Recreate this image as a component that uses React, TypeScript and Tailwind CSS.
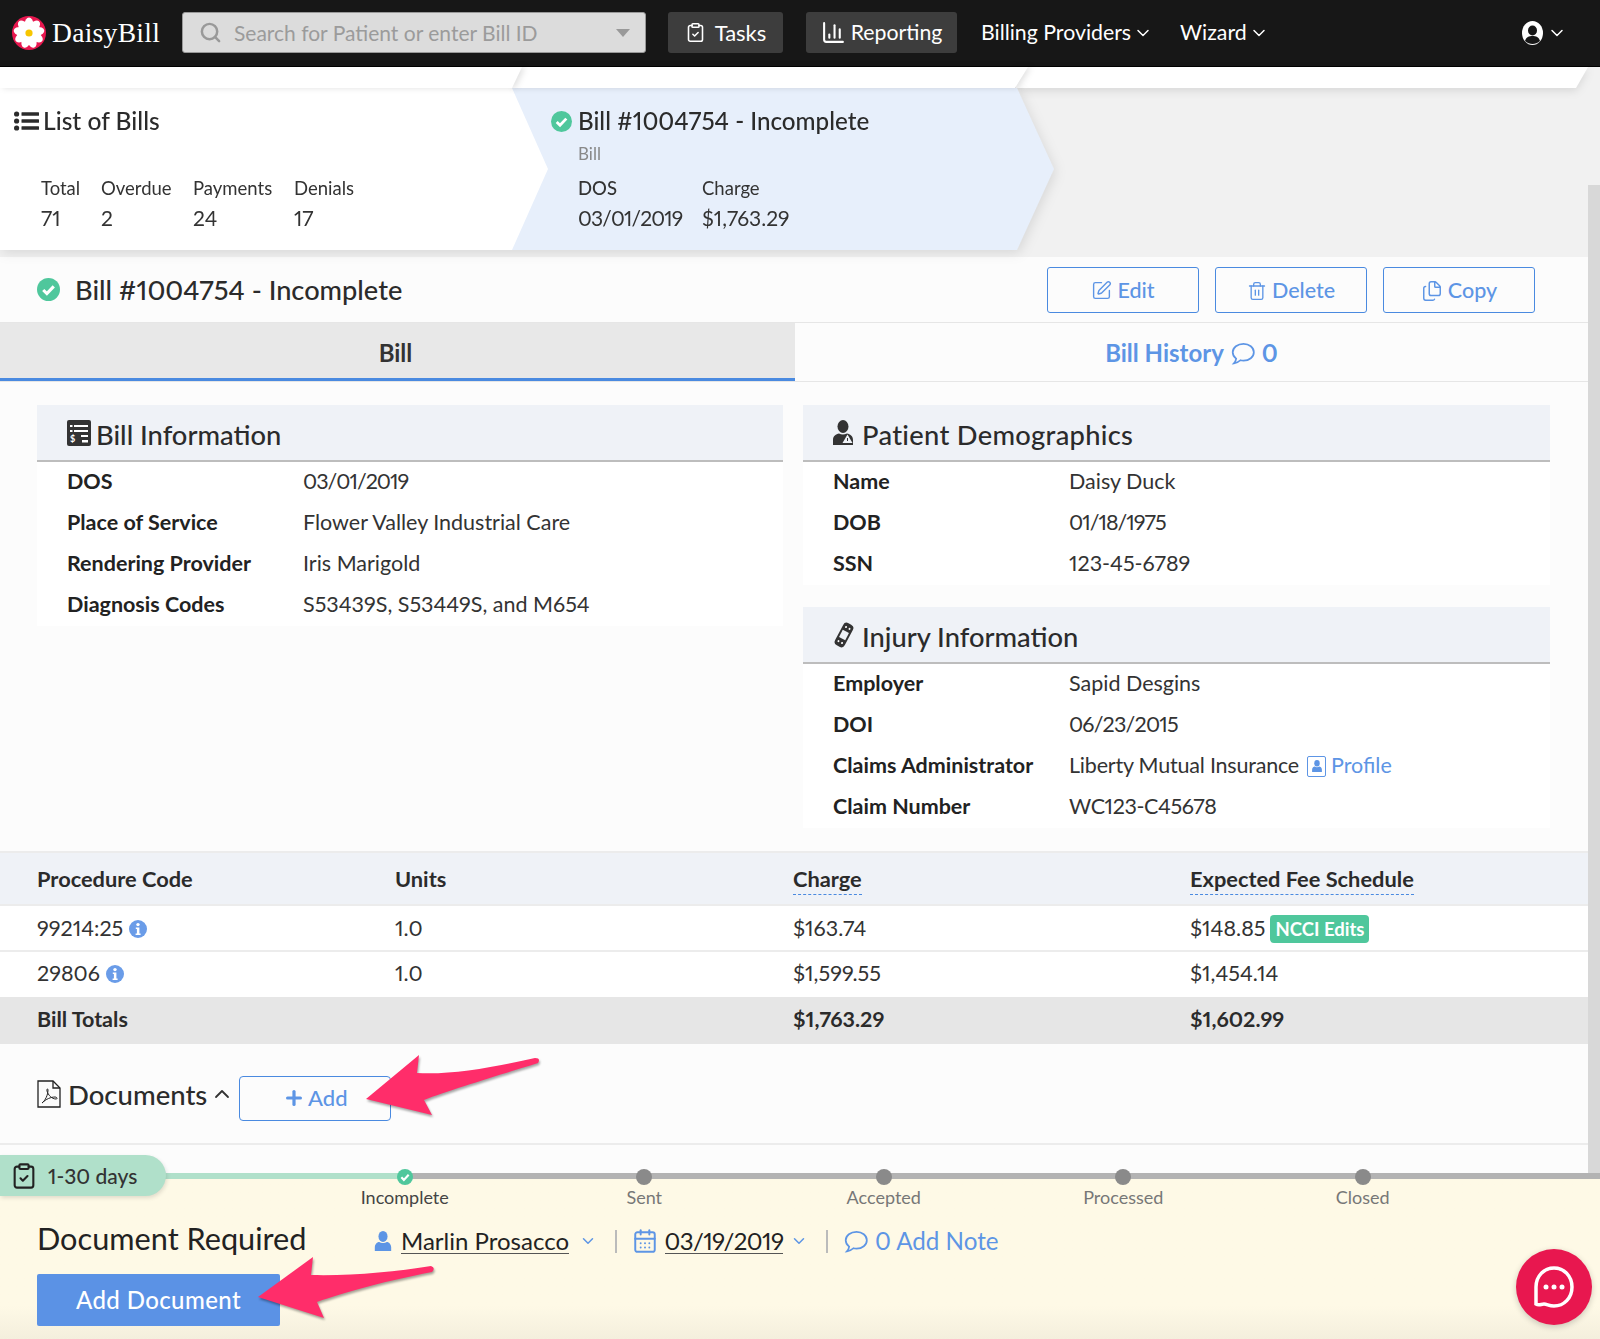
import { ChevronDown, ChevronUp, Files, Plus, Search, SquarePen, Trash2, CalendarDays, ClipboardCheck, ChartColumn } from "lucide-react"

const billInfo: [string, React.ReactNode][] = [
  ["DOS", <Tight key="d">03/01/2019</Tight>],
  ["Place of Service", "Flower Valley Industrial Care"],
  ["Rendering Provider", "Iris Marigold"],
  ["Diagnosis Codes", "S53439S, S53449S, and M654"],
]
const patient: [string, React.ReactNode][] = [
  ["Name", "Daisy Duck"],
  ["DOB", <Tight key="b">01/18/1975</Tight>],
  ["SSN", "123-45-6789"],
]

// Lato's slashes run wider than the reference face
function Tight({ children }: { children: React.ReactNode }) {
  return <span className="tracking-[-1px]">{children}</span>
}

function Flower() {
  const angles = [0, 40, 80, 120, 160, 200, 240, 280, 320]
  return (
    <svg width="34" height="34" viewBox="0 0 34 34" className="shrink-0">
      <circle cx="17" cy="17" r="17" fill="#e8174f" />
      {angles.map((a) => (
        <ellipse key={a} cx="17" cy="8.5" rx="4.4" ry="7" fill="#fff" transform={`rotate(${a} 17 17)`} />
      ))}
      <circle cx="17" cy="17" r="3.6" fill="#f7c600" />
    </svg>
  )
}

function CheckDot({ size }: { size: number }) {
  return (
    <svg width={size} height={size} viewBox="0 0 24 24" className="shrink-0">
      <circle cx="12" cy="12" r="12" fill="#4fc79c" />
      <path d="M6.5 12.5l3.8 3.8 7.2-7.6" fill="none" stroke="#fff" strokeWidth="3.2" />
    </svg>
  )
}

function InfoDot() {
  return (
    <svg width="18" height="18" viewBox="0 0 18 18" className="shrink-0">
      <circle cx="9" cy="9" r="9" fill="#6a9ce8" />
      <circle cx="9" cy="4.6" r="1.7" fill="#fff" />
      <path d="M6.8 7.4h3.6v6h1.2v1.6H6.6v-1.6h1.3V9H6.8z" fill="#fff" />
    </svg>
  )
}

function Person({ color, size }: { color: string; size: number }) {
  return (
    <svg width={size} height={size} viewBox="0 0 20 22" className="shrink-0">
      <ellipse cx="10" cy="6" rx="5" ry="6" fill={color} />
      <path d="M1 22v-4c0-4 3-6 5-6 2 1.600 6 1.600 8 0 2 0 5 2 5 6v4z" fill={color} />
    </svg>
  )
}

function Bubble({ size }: { size: number }) {
  return (
    <svg width={size} height={size} viewBox="0 0 24 24" fill="none" stroke="#5d95e5" strokeWidth="1.6" className="shrink-0">
      <path d="M12.5 3.500c5.200 0 9.500 3.400 9.500 7.800s-4.300 7.800-9.500 7.800c-1 0-2-.1-2.900-.4-1.500 1.500-3.600 2.500-6 2.800 1.200-1.300 1.900-2.700 2.100-4.300C3.700 15.700 2.500 13.600 2.500 11.300c0-4.400 4.500-7.800 10-7.800z" />
    </svg>
  )
}

function ListIcon() {
  return (
    <svg width="25" height="20" viewBox="0 0 25 20" fill="#2b2b2b" className="shrink-0">
      <circle cx="2.600" cy="3" r="2.600" />
      <circle cx="2.600" cy="10" r="2.600" />
      <circle cx="2.600" cy="17" r="2.600" />
      <rect x="7.500" y="1.300" width="17.500" height="3.400" rx="0.500" />
      <rect x="7.500" y="8.300" width="17.500" height="3.400" rx="0.500" />
      <rect x="7.500" y="15.300" width="17.500" height="3.400" rx="0.500" />
    </svg>
  )
}

function BillIcon() {
  return (
    <svg width="24" height="26" viewBox="0 0 24 26" className="shrink-0">
      <rect width="24" height="26" rx="2" fill="#333" />
      <path d="M7 5h14v2H7zM7 10h14v2H7zM14 15h7v2h-7zM15 20h6v2.500h-6z" fill="#fff" />
      <path d="M3 5h2.500v2H3zM3 10h2.500v2H3z" fill="#fff" />
      <text x="3" y="22" fontSize="9" fontWeight="700" fill="#fff" fontFamily="Lato, sans-serif">$</text>
    </svg>
  )
}

function PatientIcon() {
  return (
    <svg width="21" height="25" viewBox="0 0 21 25" className="shrink-0">
      <ellipse cx="10" cy="6.500" rx="5.500" ry="6.500" fill="#333" />
      <path d="M0 25v-5c0-4 3-6 6-6.500 2.500 1.300 5 1.300 8 0 3 .5 6 2.500 6 6.500v5z" fill="#333" />
      <path d="M14.500 14.500l5 8.500h-10z" fill="#eff2f7" />
      <path d="M14 18h1v3h-1z" fill="#333" />
    </svg>
  )
}

function BandageIcon() {
  return (
    <svg width="22" height="26" viewBox="0 0 22 26" className="shrink-0">
      <g transform="rotate(28 11 13)">
        <rect x="5.500" y="0.500" width="11" height="25" rx="4" fill="#333" />
        <rect x="7.500" y="9" width="7" height="8" fill="#eff2f7" />
        <circle cx="9" cy="5" r="1" fill="#fff" />
        <circle cx="13" cy="5" r="1" fill="#fff" />
        <circle cx="9" cy="21" r="1" fill="#fff" />
        <circle cx="13" cy="21" r="1" fill="#fff" />
      </g>
    </svg>
  )
}

function PdfIcon() {
  return (
    <svg width="24" height="28" viewBox="0 0 24 28" fill="none" stroke="#222" strokeWidth="1.300" className="shrink-0">
      <path d="M1 1h15l7 7v19H1z" />
      <path d="M16 1v7h7" />
      <path d="M5 23c3-2 6-8 6-13 0-2-1.500-1-1 1 1 4 5 8 9 8 2 0 1-2-1-2-4 0-9 2-13 6z" strokeWidth="1" />
    </svg>
  )
}

function SectionHead({ icon, title, cls }: { icon: React.ReactNode; title: string; cls: string }) {
  return (
    <div className={`flex h-[57px] items-center ${cls} border-b-2 border-[#bdbdbd] bg-[#eff2f7] pl-[30px] text-[27.300px] font-medium leading-none text-[#2b2b2b]`}>
      {icon}
      <span className="pt-[5px]">{title}</span>
    </div>
  )
}

function InfoRow({ label, children }: { label: string; children: React.ReactNode }) {
  return (
    <div className="grid h-[41px] grid-cols-[236px_1fr] items-center pb-[1px] pl-[30px] text-[21.500px] leading-none">
      <div className="font-bold text-[#222]">{label}</div>
      <div className="flex items-center text-[#333]">{children}</div>
    </div>
  )
}

function OutlineBtn({ icon, label }: { icon: React.ReactNode; label: string }) {
  return (
    <button className="flex h-[46px] w-[152px] items-center justify-center gap-[5px] rounded-[3px] border-[1.5px] border-[#4a8ae0] pt-[2px] text-[21.500px] font-medium text-[#5d95e5]">
      {icon}
      {label}
    </button>
  )
}

function TableRow({ cells, cls }: { cells: React.ReactNode[]; cls: string }) {
  return (
    <div className={`grid grid-cols-[358px_398px_397px_1fr] items-center pl-[37px] leading-none ${cls}`}>
      <div className="flex items-center gap-[6px]">{cells[0]}</div>
      <div>{cells[1]}</div>
      <div>{cells[2]}</div>
      <div className="flex items-center gap-[6px]">{cells[3]}</div>
    </div>
  )
}

function Tip({ children }: { children: React.ReactNode }) {
  return <span className="mt-[5px] inline-block border-b-[1.5px] border-dashed border-[#4a8ae0] pb-[4px]">{children}</span>
}

function Step({ label, active }: { label: string; active?: boolean }) {
  return (
    <div className="flex w-[239.500px] flex-col items-center">
      {active ? <CheckDot size={16} /> : <div className="size-[16px] rounded-full bg-[#8a8a8a]" />}
      <div className={`text-[18px] leading-[24px] ${active ? "text-[#444]" : "text-[#777]"}`}>{label}</div>
    </div>
  )
}

export default function App() {
  return (
    <div className="relative flex h-[1339px] w-[1600px] flex-col overflow-hidden bg-[#fcfcfc] font-['Lato',sans-serif] text-[#333] proportional-nums">
      {/* top bar */}
      <header className="flex h-[67px] shrink-0 items-center border-b border-black bg-[#171717] pb-[1px] pl-[12px] text-white">
        <Flower />
        <div className="ml-[6px] w-[130px] font-['Liberation_Serif',serif] text-[27.500px] leading-none tracking-[0.3px]">DaisyBill</div>
        <div className="flex h-[41px] w-[464px] items-center rounded-[3px] border border-[#999] bg-[#dcdcdc] pl-[16px]">
          <Search size={23} strokeWidth={2.6} className="text-[#999]" />
          <span className="ml-[12px] w-[382px] text-[21px] text-[#9b9b9b]">Search for Patient or enter Bill ID</span>
          <span className="border-x-[7px] border-t-[8px] border-x-transparent border-t-[#999]" />
        </div>
        <div className="ml-[22px] flex h-[41px] w-[115px] items-center justify-center gap-[9px] rounded-[3px] bg-[#3d3d3d] text-[22px]">
          <ClipboardCheck size={21} strokeWidth={1.800} />
          Tasks
        </div>
        <div className="ml-[23px] flex h-[41px] w-[151px] items-center justify-center gap-[5px] rounded-[3px] bg-[#3d3d3d] text-[21.300px]">
          <ChartColumn size={25} strokeWidth={2} />
          Reporting
        </div>
        <div className="ml-[24px] flex items-center gap-[2px] text-[21.300px]">
          Billing Providers <ChevronDown size={20} strokeWidth={1.800} />
        </div>
        <div className="ml-[27px] flex items-center gap-[2px] text-[21.300px]">
          Wizard <ChevronDown size={20} strokeWidth={1.800} />
        </div>
        <div className="ml-auto mr-[33px] flex items-center gap-[4px]">
          <svg width="21" height="24" viewBox="0 0 21 24">
            <ellipse cx="10.500" cy="12" rx="10.500" ry="12" fill="#fff" />
            <ellipse cx="10.500" cy="9.500" rx="4.500" ry="5" fill="#171717" />
            <path d="M3 20c1-4 4-5 7.500-5s6.500 1 7.500 5c-2 2-5 3-7.500 3S5 22 3 20z" fill="#171717" />
          </svg>
          <ChevronDown size={20} strokeWidth={1.800} />
        </div>
      </header>

      {/* page + scrollbar */}
      <div className="flex min-h-0 flex-1">
        <main className="w-[1588px] shrink-0">
          <div className="bg-[#f1f1f1] pb-[7px]">
            {/* tail of the row above */}
            <div className="flex h-[21px]">
              <div className="relative z-20 w-[522px] drop-shadow-[3px_0_3px_rgba(0,0,0,0.12)]">
                <div className="h-full bg-white [clip-path:polygon(0_0,100%_0,512px_100%,0_100%)]" />
              </div>
              <div className="relative z-10 -ml-[12px] w-[518px] drop-shadow-[3px_0_3px_rgba(0,0,0,0.12)]">
                <div className="h-full bg-white [clip-path:polygon(0_0,100%_0,505px_100%,0_100%)]" />
              </div>
              <div className="-ml-[12px] w-[572px] drop-shadow-[0_3px_4px_rgba(0,0,0,0.1)]">
                <div className="h-full bg-white [clip-path:polygon(0_0,100%_0,560px_100%,0_100%)]" />
              </div>
            </div>

            {/* breadcrumb chevrons */}
            <div className="w-[1054px] drop-shadow-[2px_3px_6px_rgba(0,0,0,0.1)]">
              <div className="flex h-[162px] bg-[#e7effb] [clip-path:polygon(0_0,1017px_0,1054px_50%,1017px_100%,0_100%)]">
                <div className="h-full w-[548px] shrink-0 bg-white pl-[14px] pt-[19px] [clip-path:polygon(0_0,512px_0,548px_50%,512px_100%,0_100%)]">
                  <div className="flex h-[28px] items-center gap-[4px] text-[24.600px] font-medium leading-none text-[#2b2b2b]">
                    <ListIcon />
                    List of Bills
                  </div>
                  <div className="ml-[27px] mt-[39px] grid grid-cols-[60px_92px_101px_80px] text-[18.500px] leading-[29px] text-[#333]">
                    <div>Total</div>
                    <div>Overdue</div>
                    <div>Payments</div>
                    <div>Denials</div>
                    <div className="text-[21px]">71</div>
                    <div className="text-[21px]">2</div>
                    <div className="text-[21px]">24</div>
                    <div className="text-[21px]">17</div>
                  </div>
                </div>
                <div className="pl-[3px] pt-[19px]">
                  <div className="flex h-[28px] items-center gap-[6px] text-[24.200px] font-medium leading-none text-[#2b2b2b]">
                    <CheckDot size={21} />
                    Bill #1004754 - Incomplete
                  </div>
                  <div className="ml-[27px] mt-[7px] text-[17px] leading-[24px] text-[#888]">Bill</div>
                  <div className="ml-[27px] mt-[8px] grid grid-cols-[124px_100px] text-[18.500px] leading-[29px]">
                    <div className="font-medium">DOS</div>
                    <div>Charge</div>
                    <div className="text-[21px] tracking-[-0.8px]">03/01/2019</div>
                    <div className="text-[21px]">$1,763.29</div>
                  </div>
                </div>
              </div>
            </div>
          </div>

          {/* title */}
          <div className="flex h-[66px] items-center border-b border-[#e6e6e6] pl-[37px] pr-[53px]">
            <CheckDot size={23} />
            <h1 className="ml-[15px] text-[27.200px] font-medium leading-none text-[#2b2b2b]">Bill #1004754 - Incomplete</h1>
            <div className="ml-auto flex gap-[16px]">
              <OutlineBtn icon={<SquarePen size={21} strokeWidth={1.600} />} label="Edit" />
              <OutlineBtn icon={<Trash2 size={20} strokeWidth={1.600} />} label="Delete" />
              <OutlineBtn icon={<Files size={22} strokeWidth={1.600} />} label="Copy" />
            </div>
          </div>

          {/* tabs */}
          <div className="flex h-[59px] border-b border-[#e6e6e6] text-[24px] font-bold leading-none">
            <div className="flex w-[795px] items-center justify-center border-b-[3px] border-[#4a8ae0] bg-[#e8e8e8] pr-[4px] pt-[4px] text-[#333]">Bill</div>
            <div className="flex flex-1 items-center justify-center gap-[6px] pt-[2px] text-[#5d95e5]">
              Bill History <Bubble size={26} /> 0
            </div>
          </div>

          {/* info panels */}
          <div className="grid h-[471px] grid-cols-[746px_747px] gap-x-[20px] border-b-2 border-[#ececec] pl-[37px] pt-[23px]">
            <section className="self-start bg-white">
              <SectionHead icon={<BillIcon />} title="Bill Information" cls="gap-[5px]" />
              {billInfo.map(([k, v]) => (
                <InfoRow key={k} label={k}>{v}</InfoRow>
              ))}
            </section>
            <div className="flex flex-col gap-[22px]">
              <section className="bg-white">
                <SectionHead icon={<PatientIcon />} title="Patient Demographics" cls="gap-[8px] tracking-[0.3px]" />
                {patient.map(([k, v]) => (
                  <InfoRow key={k} label={k}>{v}</InfoRow>
                ))}
              </section>
              <section className="bg-white">
                <SectionHead icon={<BandageIcon />} title="Injury Information" cls="gap-[7px]" />
                <InfoRow label="Employer">Sapid Desgins</InfoRow>
                <InfoRow label="DOI"><span className="tracking-[-0.8px]">06/23/2015</span></InfoRow>
                <InfoRow label="Claims Administrator">
                  <span className="tracking-[-0.2px]">Liberty Mutual Insurance</span>
                  <span className="ml-[8px] flex items-center gap-[5px] text-[#5d95e5]">
                    <span className="flex h-[21px] w-[19px] items-center justify-center rounded-[2px] border-[1.5px] border-[#5d95e5]">
                      <Person color="#5d95e5" size={12} />
                    </span>
                    Profile
                  </span>
                </InfoRow>
                <InfoRow label="Claim Number"><span className="tracking-[-0.4px]">WC123-C45678</span></InfoRow>
              </section>
            </div>
          </div>

          {/* procedures table */}
          <TableRow
            cls="h-[53px] border-b-2 border-[#ececec] bg-[#eff2f7] pt-[1px] text-[21.800px] font-bold text-[#2b2b2b]"
            cells={["Procedure Code", "Units", <Tip key="c">Charge</Tip>, <Tip key="e">Expected Fee Schedule</Tip>]}
          />
          <TableRow
            cls="h-[46px] border-b-2 border-[#ececec] bg-white pt-[2px] text-[21.500px]"
            cells={[<>99214:25 <InfoDot /></>, "1.0", "$163.74", <>$148.85 <span key="n" className="-ml-[1px] rounded-[4px] bg-[#4fc79c] px-[5px] py-[5px] text-[18.500px] font-bold text-white">NCCI Edits</span></>]}
          />
          <TableRow
            cls="h-[45px] bg-white pb-[1px] text-[21.500px]"
            cells={[<>29806 <InfoDot /></>, "1.0", "$1,599.55", "$1,454.14"]}
          />
          <TableRow cls="h-[47px] bg-[#e6e6e6] pb-[2px] text-[21.500px] font-bold text-[#2b2b2b]" cells={["Bill Totals", "", "$1,763.29", "$1,602.99"]} />

          {/* documents */}
          <div className="flex h-[101px] items-center border-b-2 border-[#ececec] pl-[37px]">
            <PdfIcon />
            <span className="ml-[7px] pt-[2px] text-[27.500px] font-medium leading-none text-[#2b2b2b]">Documents</span>
            <ChevronUp size={24} strokeWidth={1.800} className="ml-[3px]" />
            <button className="ml-[5px] mt-[10px] flex h-[45px] w-[152px] items-center justify-center gap-[3px] rounded-[4px] border-[1.5px] border-[#4a8ae0] pb-[2px] text-[22px] font-medium text-[#5d95e5]">
              <Plus size={22} strokeWidth={3.500} />
              Add
            </button>
          </div>
        </main>
        <div className="flex-1 bg-[#f1f1f1] pt-[118px]">
          <div className="h-full bg-[#d8d8d8]" />
        </div>
      </div>

      {/* workflow footer */}
      <footer className="relative h-[166px] shrink-0 bg-linear-to-b from-[#fef9e6] from-80% to-[#f4efdd] pl-[37px]">
        <div className="absolute inset-x-0 top-0 flex h-[6px]">
          <div className="w-[405px] bg-[#b0e0ca]" />
          <div className="flex-1 bg-[#b3b3b3]" />
        </div>
        <div className="absolute left-0 top-[-18px] flex h-[41px] w-[166px] items-center gap-[10px] rounded-r-[21px] bg-[#b0e0ca] pl-[10px] text-[21px] font-medium leading-none text-[#333] shadow-[1px_2px_4px_rgba(0,0,0,0.12)]">
          <ClipboardCheck size={28} strokeWidth={1.800} className="text-[#222]" />
          1-30 days
        </div>
        <div className="relative -mt-[4px] ml-[248px] flex">
          <Step label="Incomplete" active />
          <Step label="Sent" />
          <Step label="Accepted" />
          <Step label="Processed" />
          <Step label="Closed" />
        </div>
        <div className="mt-[10px] flex h-[44px] items-center text-[24px] leading-none">
          <h2 className="-mt-[4px] w-[336px] text-[30.700px] text-[#222]">Document Required</h2>
          <Person color="#5d95e5" size={20} />
          <span className="ml-[8px] border-b border-[#555] text-[#222]">Marlin Prosacco</span>
          <ChevronDown size={18} strokeWidth={2} className="ml-[10px] text-[#5d95e5]" />
          <div className="mx-[18px] h-[23px] w-[1.500px] bg-[#bbb]" />
          <CalendarDays size={26} strokeWidth={1.800} className="-ml-[3px] text-[#5d95e5]" />
          <span className="ml-[7px] border-b border-[#555] tracking-[-0.6px] text-[#222]">03/19/2019</span>
          <ChevronDown size={18} strokeWidth={2} className="ml-[7px] text-[#5d95e5]" />
          <div className="mx-[18px] h-[23px] w-[1.500px] bg-[#bbb]" />
          <div className="-ml-[3px]"><Bubble size={26} /></div>
          <span className="ml-[6px] text-[24.200px] text-[#5d95e5]">0 Add Note</span>
        </div>
        <button className="mt-[11px] flex h-[52px] w-[243px] items-center justify-center rounded-[2px] bg-[#5b92e5] text-[24px] font-medium leading-none tracking-[0.4px] text-white">
          Add Document
        </button>
      </footer>

      {/* annotation arrows */}
      <svg width="185" height="72" viewBox="360 1050 185 72" className="absolute left-[360px] top-[1050px] drop-shadow-[1px_2px_1px_rgba(0,0,0,0.35)]">
        <path d="M366 1099L419 1055L417 1073C450 1075 490 1068 535 1058Q541 1058 538 1063C500 1075 450 1090 424 1100L432 1115Z" fill="#ff2d6a" />
      </svg>
      <svg width="185" height="72" viewBox="255 1250 185 72" className="absolute left-[255px] top-[1250px] drop-shadow-[1px_2px_1px_rgba(0,0,0,0.35)]">
        <path d="M258 1297L313 1257L311 1275C350 1276 395 1272 431 1266Q436 1268 432 1272C390 1280 345 1292 317 1302L324 1318Z" fill="#ff2d6a" />
      </svg>

      {/* chat launcher */}
      <div className="absolute left-[1516px] top-[1249px] flex size-[76px] items-center justify-center rounded-full bg-[#e8174f] shadow-[0_2px_6px_rgba(0,0,0,0.2)]">
        <svg width="48" height="48" viewBox="0 0 48 48" fill="none">
          <path d="M6 41V24C6 13 14 5 24 5s18 8 18 19-8 19-18 19c-5 0-7-2-10-2-3 0-5 2-8 0z" stroke="#fff" strokeWidth="3.500" />
          <circle cx="16" cy="24" r="2.500" fill="#fff" />
          <circle cx="24" cy="24" r="2.500" fill="#fff" />
          <circle cx="32" cy="24" r="2.500" fill="#fff" />
        </svg>
      </div>
    </div>
  )
}
